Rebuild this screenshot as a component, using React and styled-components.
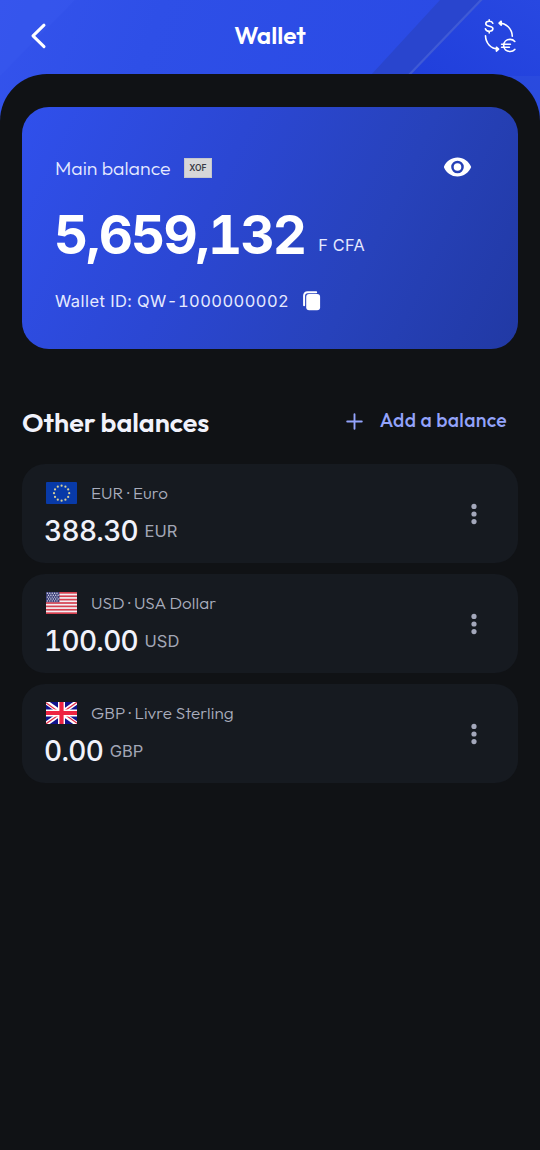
import React from "react";
import styled, { createGlobalStyle } from "styled-components";

const display = `Outfit, Lato, "Open Sans", sans-serif`;
const numeric = `Inter, "Liberation Sans", sans-serif`;

const GlobalStyle = createGlobalStyle`
  *, *::before, *::after { box-sizing: border-box; }
  body { margin: 0; background: #101215; color: #f1f2fb; font-family: ${display}; }
  button { border: 0; padding: 0; background: none; color: inherit; font: inherit; display: flex; align-items: center; }
  h1, h2, p { margin: 0; }
  svg { display: block; flex: none; }
`;

const Screen = styled.div`
  position: relative;
  width: 540px;
  height: 1150px;
  overflow: hidden;
`;

const Backdrop = styled.svg`
  position: absolute;
  inset: 0 0 auto 0;
`;

const Header = styled.header`
  position: relative;
  display: grid;
  grid-template-columns: 60px 1fr 60px;
  align-items: center;
  height: 74px;
  color: #fff;
  padding: 0 24px 3px 28px;
  & > button:last-child { justify-self: end; }
`;

const Title = styled.h1`
  text-align: center;
  font-size: 24.5px;
  line-height: 30px;
  font-weight: 570;
  padding: 0 4px 2px 0;
`;

const Sheet = styled.main`
  position: relative;
  height: 1076px;
  padding: 33px 22px 0;
  border-radius: 47px 47px 0 0;
  background: #101215;
`;

const BalanceCard = styled.section`
  height: 242px;
  padding: 46px 46px 0 33px;
  border-radius: 27px;
  background: linear-gradient(116deg, #3050ec 0%, #2b47d3 38%, #2742bb 68%, #2139a4 100%);
`;

const CardTop = styled.div`
  display: flex;
  align-items: center;
  height: 30px;
  & > button { margin: -2px 0 0 auto; }
`;

const CardLabel = styled.span`
  font-size: 19.5px;
  font-weight: 320;
  line-height: 30px;
  color: #e6eaff;
  width: 129px;
  white-space: nowrap;
`;

const CurrencyBadge = styled.span`
  width: 28px;
  height: 20px;
  margin-top: -1px;
  border: 1px solid #c5c7cd;
  background: #d7d7d8;
  color: #393b45;
  font: 600 8.5px/19px ${numeric};
  text-align: center;
`;

const MainAmount = styled.div`
  display: flex;
  align-items: baseline;
  height: 64px;
  margin: 20px 0 0 -1px;
  color: #fff;
  font: 680 53px/64px ${numeric};
  font-variant-numeric: tabular-nums;
  letter-spacing: -1.9px;
`;

const MainUnit = styled.span`
  position: relative;
  top: -3px;
  margin-left: 13px;
  font-size: 16.3px;
  font-weight: 400;
  letter-spacing: 0.3px;
  color: #e4e9ff;
`;

const WalletLine = styled.div`
  display: flex;
  align-items: center;
  height: 28px;
  margin-top: 20px;
  color: #e6eaff;
  font: 400 16.5px/28px ${numeric};
  font-variant-numeric: tabular-nums;
  letter-spacing: 0.43px;
  & > span { width: 248px; white-space: nowrap; }
`;

const SectionHead = styled.div`
  display: flex;
  align-items: center;
  justify-content: space-between;
  height: 36px;
  margin: 55px 11px 24px 0;
`;

const SectionTitle = styled.h2`
  font-size: 27px;
  line-height: 36px;
  font-weight: 560;
  letter-spacing: -0.05px;
`;

const AddButton = styled.button`
  && {
    gap: 17px;
    color: #93a3fb;
    font: 550 19.4px/26px ${display};
    letter-spacing: 0.32px;
    margin-top: -4px;
    white-space: nowrap;
  }
  & > svg { margin-top: 2px; }
`;

const List = styled.div`
  display: grid;
  gap: 11px;
`;

const Row = styled.article`
  display: flex;
  align-items: center;
  justify-content: space-between;
  height: 99px;
  padding: 0 40px 0 22px;
  border-radius: 23px;
  background: #161a20;
`;

const RowLabel = styled.div`
  display: flex;
  align-items: center;
  gap: 14px;
  height: 28px;
  padding-left: 2px;
  color: #a9adbd;
  font-size: 17px;
  font-weight: 320;
  line-height: 30px;
  letter-spacing: 0.06px;
  white-space: nowrap;
`;

const RowAmount = styled.div`
  display: flex;
  align-items: baseline;
  gap: 6.5px;
  height: 38px;
  margin-top: 4px;
  font: 550 28px/40px ${numeric};
  font-variant-numeric: tabular-nums;
  letter-spacing: -0.7px;
`;

const RowUnit = styled.span`
  position: relative;
  top: -4px;
  color: #a2a6b5;
  font-size: 16.5px;
  font-weight: 400;
  letter-spacing: 0;
`;

const HeaderShapes = () => (
  <Backdrop width="540" height="150" viewBox="0 0 540 150">
    <defs>
      <linearGradient id="sky" x1="0" y1="0" x2="1" y2="0.1">
        <stop offset="0" stopColor="#3453ec" />
        <stop offset="0.3" stopColor="#2e4fe7" />
        <stop offset="1" stopColor="#2949e4" />
      </linearGradient>
      <linearGradient id="corner" x1="0" y1="1" x2="1" y2="0">
        <stop offset="0" stopColor="#1f3edb" />
        <stop offset="1" stopColor="#2848e1" />
      </linearGradient>
    </defs>
    <rect width="540" height="150" fill="url(#sky)" />
    <path d="M0 0H75L0 76Z" fill="#3858ee" opacity=".5" />
    <path d="M440 0H482L410 75H371Z" fill="#2945ce" />
    <path d="M482 0H540V90H396Z" fill="url(#corner)" />
    <path d="M440 76H540V120Z" fill="#3050df" opacity=".55" />
    <path d="M482 -1L409 75" stroke="#3f5ad6" strokeWidth="2.2" />
  </Backdrop>
);

const BackIcon = () => (
  <svg width="22" height="28" viewBox="0 0 22 28" fill="none" stroke="#fff" strokeWidth="3" strokeLinecap="round" strokeLinejoin="round">
    <path d="M16 3.2L5 13.9L16 24.6" />
  </svg>
);

const ExchangeIcon = () => (
  <svg width="32" height="34" viewBox="0 0 32 34" fill="none" stroke="#fff" strokeWidth="1.6" strokeLinecap="round" strokeLinejoin="round">
    <path d="M8.8 4.2C8.2 2.8 7 2.3 5.3 2.3C3.3 2.3 1.8 3.2 1.8 4.8C1.8 8.4 8.9 6 8.9 9.6C8.9 11.4 7.3 12.3 5.3 12.3C3.2 12.3 1.8 11.5 1.4 9.8M5.2 .9V2.3M5.2 12.3V13.9" />
    <path d="M15.2 4.1C22 4.1 28 9.4 28.3 17.2M17.2 2.2L15.1 4.1L17.2 6.1Z" />
    <path d="M1.5 16.8C1.7 23.8 6.6 29.9 14.2 30.2M12.4 28.2L14.6 30.2L12.4 32.1Z" />
    <path d="M30.8 22.5C29.5 21 28 20.4 26.2 20.4C22.4 20.4 19.7 22.9 19.7 26.5C19.7 30.2 22.4 32.5 26.2 32.5C28 32.5 29.5 31.9 30.8 30.4M17.6 25.2H26.4M17.6 28.2H25.4" />
  </svg>
);

const EyeIcon = () => (
  <svg width="28" height="20" viewBox="0 0 28 20">
    <path fillRule="evenodd" fill="#fff" d="M13.5 .5C7.3 .5 2.1 4.4 -.2 10C2.1 15.6 7.3 19.5 13.5 19.5S24.9 15.6 27.2 10C24.9 4.4 19.7 .5 13.5 .5ZM13.5 3.7A6.3 6.3 0 1 1 13.5 16.3A6.3 6.3 0 0 1 13.5 3.7ZM13.5 6.2A3.8 3.8 0 1 0 13.5 13.8A3.8 3.8 0 0 0 13.5 6.2Z" />
  </svg>
);

const CopyIcon = () => (
  <svg width="18" height="20" viewBox="0 0 18 20">
    <path d="M1.1 14.2V4.8Q1.1 1.2 4.7 1.2H13.2" fill="none" stroke="#fff" strokeWidth="2" strokeLinecap="round" />
    <rect x="3.2" y="3" width="13.9" height="16.2" rx="3" fill="#fff" />
  </svg>
);

const PlusIcon = () => (
  <svg width="17" height="17" viewBox="0 0 17 17" stroke="currentColor" strokeWidth="1.9" strokeLinecap="round">
    <path d="M8.5 1.2V15.8M1.2 8.5H15.8" />
  </svg>
);

const MoreIcon = () => (
  <svg width="8" height="22" viewBox="0 0 8 22" fill="#a4a8bb">
    <circle cx="4" cy="3.4" r="2.6" />
    <circle cx="4" cy="11" r="2.6" />
    <circle cx="4" cy="18.6" r="2.6" />
  </svg>
);

const FlagEU = () => (
  <svg width="31" height="22" viewBox="0 0 31 22">
    <rect width="31" height="22" rx="1" fill="#083aa8" />
    {Array.from({ length: 12 }, (_, i) => {
      const a = (i * Math.PI) / 6;
      return <circle key={i} cx={15.6 + 7.6 * Math.sin(a)} cy={11.2 - 7.5 * Math.cos(a)} r="1.1" fill="#d5cf98" />;
    })}
  </svg>
);

const FlagUS = () => (
  <svg width="31" height="22" viewBox="0 0 31 22">
    <rect width="31" height="22" rx="1" fill="#f2eff4" />
    {Array.from({ length: 7 }, (_, i) => (
      <rect key={i} y={(i * 44) / 13} width="31" height={22 / 13} fill="#d5404f" />
    ))}
    <rect width="13.4" height="10.15" fill="#3b3f78" />
    {Array.from({ length: 25 }, (_, i) => {
      const r = Math.floor(i / 5);
      return <circle key={i} cx={1.4 + (i % 5) * 2.4 + (r % 2) * 1.1} cy={1.3 + r * 1.9} r=".7" fill="#dfe0ee" />;
    })}
  </svg>
);

const FlagGB = () => (
  <svg width="31" height="22" viewBox="0 0 31 22">
    <rect width="31" height="22" fill="#10128c" />
    <path d="M0 0L31 22M31 0L0 22" stroke="#fff" strokeWidth="4.4" />
    <path d="M0 .8L14 10.8M31 21.2L17 11.2M31 .2L17 10M0 21.8L14 12" stroke="#e22b46" strokeWidth="1.2" />
    <path d="M15.5 0V22M0 11H31" stroke="#fff" strokeWidth="7" />
    <path d="M15.5 0V22M0 11H31" stroke="#ee2442" strokeWidth="4.2" />
  </svg>
);

const balances = [
  { code: "EUR", name: "Euro", amount: "388.30", Flag: FlagEU },
  { code: "USD", name: "USA Dollar", amount: "100.00", Flag: FlagUS },
  { code: "GBP", name: "Livre Sterling", amount: "0.00", Flag: FlagGB },
];

export default function App() {
  return (
    <Screen>
      <GlobalStyle />
      <HeaderShapes />
      <Header>
        <button aria-label="Back"><BackIcon /></button>
        <Title>Wallet</Title>
        <button aria-label="Exchange"><ExchangeIcon /></button>
      </Header>
      <Sheet>
        <BalanceCard>
          <CardTop>
            <CardLabel>Main balance</CardLabel>
            <CurrencyBadge>XOF</CurrencyBadge>
            <button aria-label="Hide balance"><EyeIcon /></button>
          </CardTop>
          <MainAmount>
            5,659,132<MainUnit>F CFA</MainUnit>
          </MainAmount>
          <WalletLine>
            <span>Wallet ID: QW-1000000002</span>
            <button aria-label="Copy"><CopyIcon /></button>
          </WalletLine>
        </BalanceCard>
        <SectionHead>
          <SectionTitle>Other balances</SectionTitle>
          <AddButton><PlusIcon />Add a balance</AddButton>
        </SectionHead>
        <List>
          {balances.map(({ code, name, amount, Flag }) => (
            <Row key={code}>
              <div>
                <RowLabel><Flag /><span>{code} · {name}</span></RowLabel>
                <RowAmount>{amount}<RowUnit>{code}</RowUnit></RowAmount>
              </div>
              <button aria-label="More"><MoreIcon /></button>
            </Row>
          ))}
        </List>
      </Sheet>
    </Screen>
  );
}
